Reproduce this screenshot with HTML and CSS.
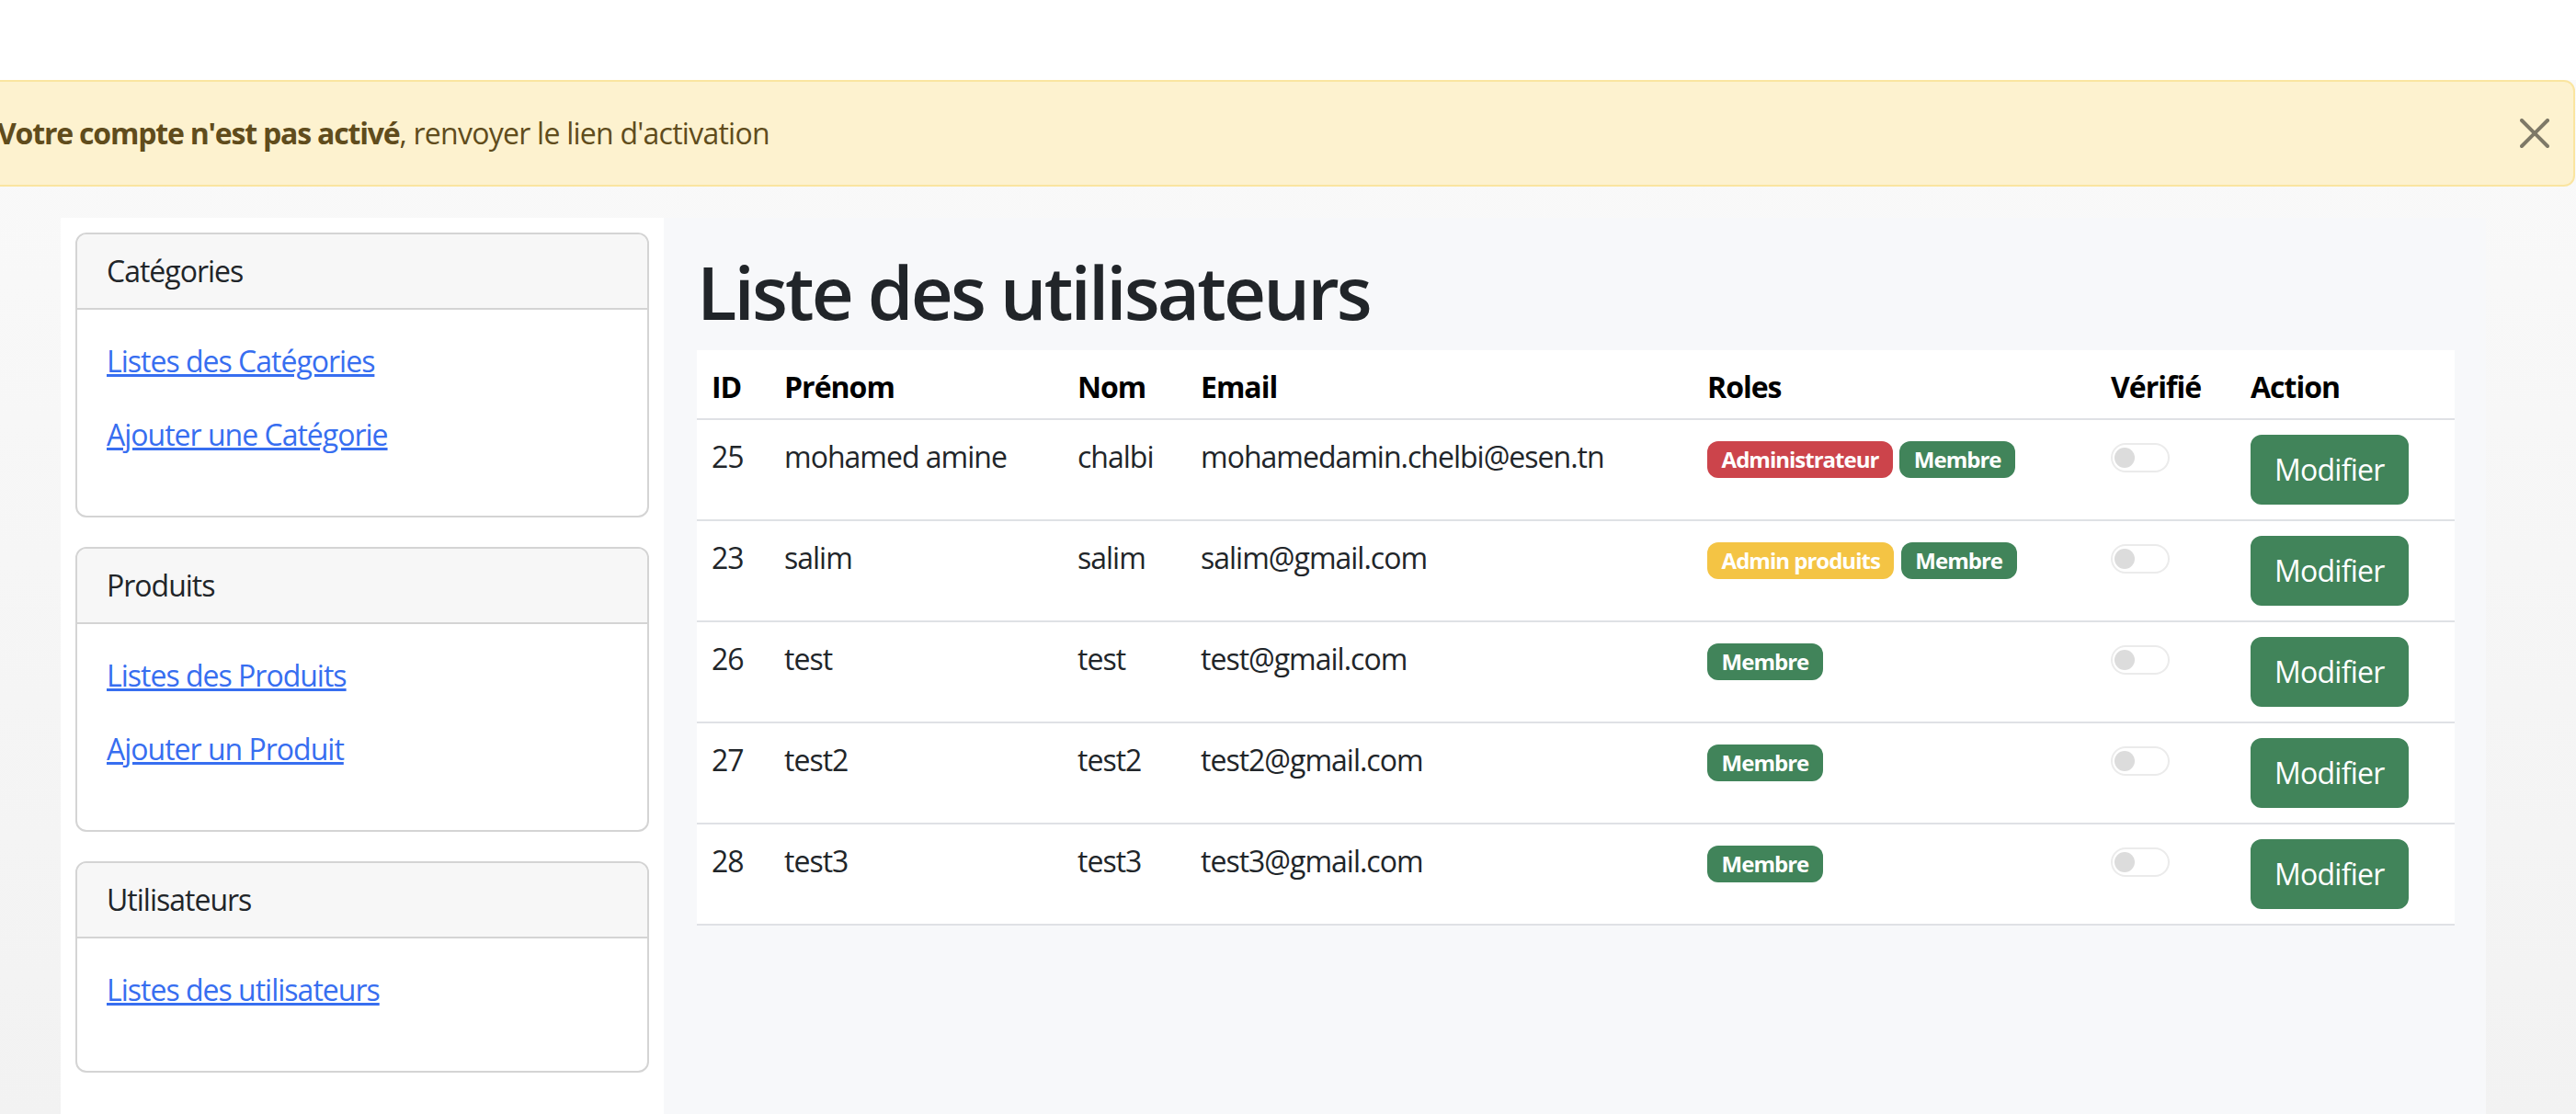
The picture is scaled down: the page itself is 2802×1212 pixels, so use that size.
FILE: index.html
```html
<!DOCTYPE html>
<html lang="fr">
<head>
<meta charset="utf-8">
<title>Liste des utilisateurs</title>
<link rel="stylesheet" href="styles.css">
</head>
<body>
<header class="topbar"></header>
<div class="alert" role="alert">
  <p class="alert-text"><strong>Votre compte n'est pas activé</strong>, renvoyer le lien d'activation</p>
  <button class="btn-close" type="button" aria-label="Fermer">
    <svg width="32" height="32" viewBox="0 0 16 16" aria-hidden="true"><path class="close-x" d="M.293.293a1 1 0 0 1 1.414 0L8 6.586 14.293.293a1 1 0 1 1 1.414 1.414L9.414 8l6.293 6.293a1 1 0 0 1-1.414 1.414L8 9.414l-6.293 6.293a1 1 0 0 1-1.414-1.414L6.586 8 .293 1.707a1 1 0 0 1 0-1.414z"/></svg>
  </button>
</div>
<div class="layout">
  <aside class="sidebar">
    <section class="card">
      <div class="card-header">Catégories</div>
      <div class="card-body">
        <p><a href="#">Listes des Catégories</a></p>
        <p><a href="#">Ajouter une Catégorie</a></p>
      </div>
    </section>
    <section class="card">
      <div class="card-header">Produits</div>
      <div class="card-body">
        <p><a href="#">Listes des Produits</a></p>
        <p><a href="#">Ajouter un Produit</a></p>
      </div>
    </section>
    <section class="card">
      <div class="card-header">Utilisateurs</div>
      <div class="card-body">
        <p><a href="#">Listes des utilisateurs</a></p>
      </div>
    </section>
  </aside>
  <main class="main">
    <h1>Liste des utilisateurs</h1>
    <table class="users">
      <colgroup>
        <col class="c-id"><col class="c-prenom"><col class="c-nom"><col class="c-email"><col class="c-roles"><col class="c-verif"><col class="c-action">
      </colgroup>
      <thead>
        <tr><th>ID</th><th>Prénom</th><th>Nom</th><th>Email</th><th>Roles</th><th>Vérifié</th><th>Action</th></tr>
      </thead>
      <tbody>
        <tr>
          <td>25</td><td>mohamed amine</td><td>chalbi</td><td>mohamedamin.chelbi@esen.tn</td>
          <td><span class="badge badge-danger">Administrateur</span> <span class="badge badge-success">Membre</span></td>
          <td><span class="switch"><span class="knob"></span></span></td>
          <td><button class="btn" type="button">Modifier</button></td>
        </tr>
        <tr>
          <td>23</td><td>salim</td><td>salim</td><td>salim@gmail.com</td>
          <td><span class="badge badge-warning">Admin produits</span> <span class="badge badge-success">Membre</span></td>
          <td><span class="switch"><span class="knob"></span></span></td>
          <td><button class="btn" type="button">Modifier</button></td>
        </tr>
        <tr>
          <td>26</td><td>test</td><td>test</td><td>test@gmail.com</td>
          <td><span class="badge badge-success">Membre</span></td>
          <td><span class="switch"><span class="knob"></span></span></td>
          <td><button class="btn" type="button">Modifier</button></td>
        </tr>
        <tr>
          <td>27</td><td>test2</td><td>test2</td><td>test2@gmail.com</td>
          <td><span class="badge badge-success">Membre</span></td>
          <td><span class="switch"><span class="knob"></span></span></td>
          <td><button class="btn" type="button">Modifier</button></td>
        </tr>
        <tr>
          <td>28</td><td>test3</td><td>test3</td><td>test3@gmail.com</td>
          <td><span class="badge badge-success">Membre</span></td>
          <td><span class="switch"><span class="knob"></span></span></td>
          <td><button class="btn" type="button">Modifier</button></td>
        </tr>
      </tbody>
    </table>
  </main>
</div>
</body>
</html>
```

FILE: styles.css
```css
* { box-sizing: border-box; }
html, body { margin: 0; padding: 0; }
body {
  font-family: "Open Sans", "Noto Sans", sans-serif;
  font-size: 32px;
  line-height: 48px;
  letter-spacing: -1px;
  color: #212529;
  background: linear-gradient(#fafafa, #f2f2f2);
  min-height: 1212px;
  overflow: hidden;
}
.topbar { height: 87px; background: #fff; }

.alert {
  display: flex;
  align-items: center;
  justify-content: space-between;
  margin-left: -37px;
  width: 2838px;
  height: 116px;
  padding: 32px 26px 32px 32px;
  border: 2px solid #fae5a0;
  border-radius: 12px;
  background: #fdf2cf;
  color: #604c1c;
}
.alert-text { margin: 0; letter-spacing: -0.75px; }
.alert-text strong { font-weight: 700; letter-spacing: -1.2px; }
.btn-close {
  display: flex;
  width: 32px;
  height: 32px;
  padding: 0;
  border: 0;
  background: none;
}
.close-x { fill: #000; fill-opacity: .5; }

.layout {
  display: flex;
  width: 2638px;
  min-height: 975px;
  margin: 34px 0 0 66px;
}
.sidebar {
  flex: none;
  width: 656px;
  padding: 16px;
  background: #fff;
}
.card {
  margin-bottom: 32px;
  border: 2px solid #d4d4d4;
  border-radius: 12px;
  background: #fff;
  overflow: hidden;
}
.card-header {
  padding: 16px 32px;
  background: #f7f7f7;
  border-bottom: 2px solid #d4d4d4;
}
.card-body { padding: 32px; }
.card-body p { margin: 0 0 32px; }
.card-body a { color: #376ef0; text-decoration: underline; }

.main {
  flex: 1;
  padding: 32px 34px 0 36px;
  background: #f7f8fa;
}
h1 {
  margin: 0 0 16px;
  font-size: 80px;
  line-height: 96px;
  font-weight: 600;
  letter-spacing: -2.9px;
  color: #212529;
}

.users {
  width: 100%;
  table-layout: fixed;
  border-collapse: collapse;
  background: #fff;
}
.c-id { width: 79px; }
.c-prenom { width: 319px; }
.c-nom { width: 134px; }
.c-email { width: 551px; }
.c-roles { width: 439px; }
.c-verif { width: 152px; }
.c-action { width: 238px; }
.users th {
  padding: 16px 16px 10px;
  text-align: left;
  font-weight: 700;
  color: #000;
  border-bottom: 2px solid #dfe1e5;
}
.users td {
  padding: 16px;
  vertical-align: top;
  border-bottom: 2px solid #dfe1e5;
  white-space: nowrap;
}

.badge {
  display: inline-block;
  padding: 8px 15.6px;
  font-size: 24px;
  font-weight: 700;
  line-height: 24px;
  letter-spacing: -1px;
  color: #fff;
  border-radius: 12px;
}
.badge-danger { background: #cc444b; }
.badge-success { background: #41845a; }
.badge-warning { background: #f4c444; }

.switch {
  display: flex;
  align-items: center;
  width: 64px;
  height: 32px;
  margin-top: 9px;
  padding-left: 2px;
  border: 2px solid #ebebeb;
  border-radius: 32px;
}
.knob {
  width: 22px;
  height: 22px;
  border-radius: 50%;
  background: #dcdcdc;
}

.btn {
  display: inline-block;
  padding: 12px 24px;
  border: 2px solid #41845a;
  border-radius: 12px;
  background: #41845a;
  color: #fff;
  font: inherit;
  line-height: 48px;
  letter-spacing: -0.75px;
}
```
